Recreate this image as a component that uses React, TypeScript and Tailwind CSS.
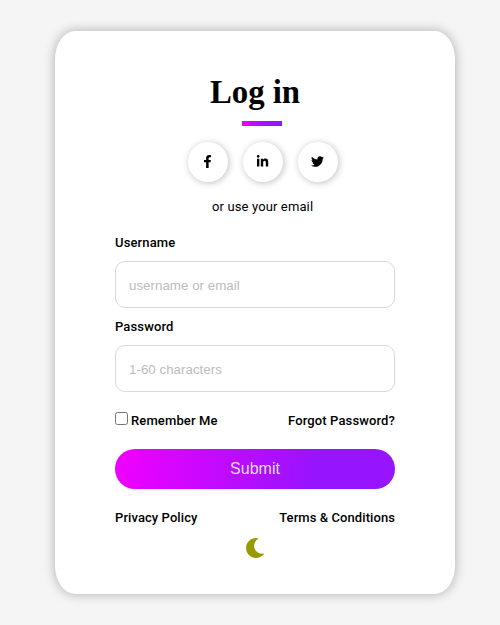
import { FaFacebookF, FaLinkedinIn, FaMoon, FaTwitter } from "react-icons/fa";

const social = [
  { name: "Facebook", Icon: FaFacebookF },
  { name: "LinkedIn", Icon: FaLinkedinIn },
  { name: "Twitter", Icon: FaTwitter },
];

function Field({ label, placeholder, type }: { label: string; placeholder: string; type: string }) {
  return (
    <label className="block h-[84px]">
      <span className="block h-[27px] text-[13px] leading-[18px] font-medium tracking-[0.13px]">{label}</span>
      <input
        type={type}
        placeholder={placeholder}
        className="block h-[47px] w-full rounded-[10px] border border-[#d9d9d9] bg-white px-[13px] pt-[2px] font-['Liberation_Sans',Arial,sans-serif] text-[13.33px] tracking-[0.02px] outline-none placeholder:text-[#bcbcbc]"
      />
    </label>
  );
}

export default function App() {
  return (
    <main className="h-[625px] w-full bg-[#f5f5f5] pt-[31px] pl-[10px] font-[Roboto,sans-serif] text-black">
      <section className="mx-auto flex h-[563px] w-[400px] flex-col rounded-[5%] bg-white px-[60px] shadow-[0_0_12px_rgba(0,0,0,0.3)]">
        <h1 className="mt-[43px] h-[37px] text-center font-['Liberation_Serif','Times_New_Roman',serif] text-[32.8px] leading-[37px] font-bold">
          Log in
        </h1>
        <div className="mt-[10px] ml-[127px] h-[5px] w-10 bg-linear-[100deg,#ec00ff_0%,#9614fe_68%]" />
        <div className="mt-4 ml-[73px] flex gap-[15px]">
          {social.map(({ name, Icon }) => (
            <a key={name} aria-label={name} className="flex size-10 items-center justify-center rounded-full pr-[2px] pb-[2px] shadow-[1px_1px_7px_rgba(0,0,0,0.25)]">
              <Icon size={13} />
            </a>
          ))}
        </div>
        <p className="mt-4 ml-[97px] h-[18px] text-[13px] leading-[18px] tracking-[0.13px] whitespace-nowrap">
          or use your email
        </p>
        <form className="mt-[18px]">
          <Field label="Username" placeholder="username or email" type="text" />
          <Field label="Password" placeholder="1-60 characters" type="password" />
          <div className="mt-[10px] flex h-[18px] justify-between text-[13px] leading-[18px] font-medium tracking-[0.13px]">
            <label className="flex">
              <input type="checkbox" className="mr-[3px] size-[13px]" />
              Remember Me
            </label>
            <a>Forgot Password?</a>
          </div>
          <button type="button" className="mt-[19px] block h-10 w-full rounded-full bg-linear-[100deg,#ec00ff_5%,#9614fe_72%] font-['Liberation_Sans',Arial,sans-serif] text-base text-[#dedede]">
            Submit
          </button>
        </form>
        <div className="mt-5 flex justify-between text-[13px] leading-[18px] font-medium tracking-[0.08px]">
          <a>Privacy Policy</a>
          <a>Terms &amp; Conditions</a>
        </div>
        <FaMoon size={20} className="mt-[11px] self-center text-[#999900]" />
      </section>
    </main>
  );
}
